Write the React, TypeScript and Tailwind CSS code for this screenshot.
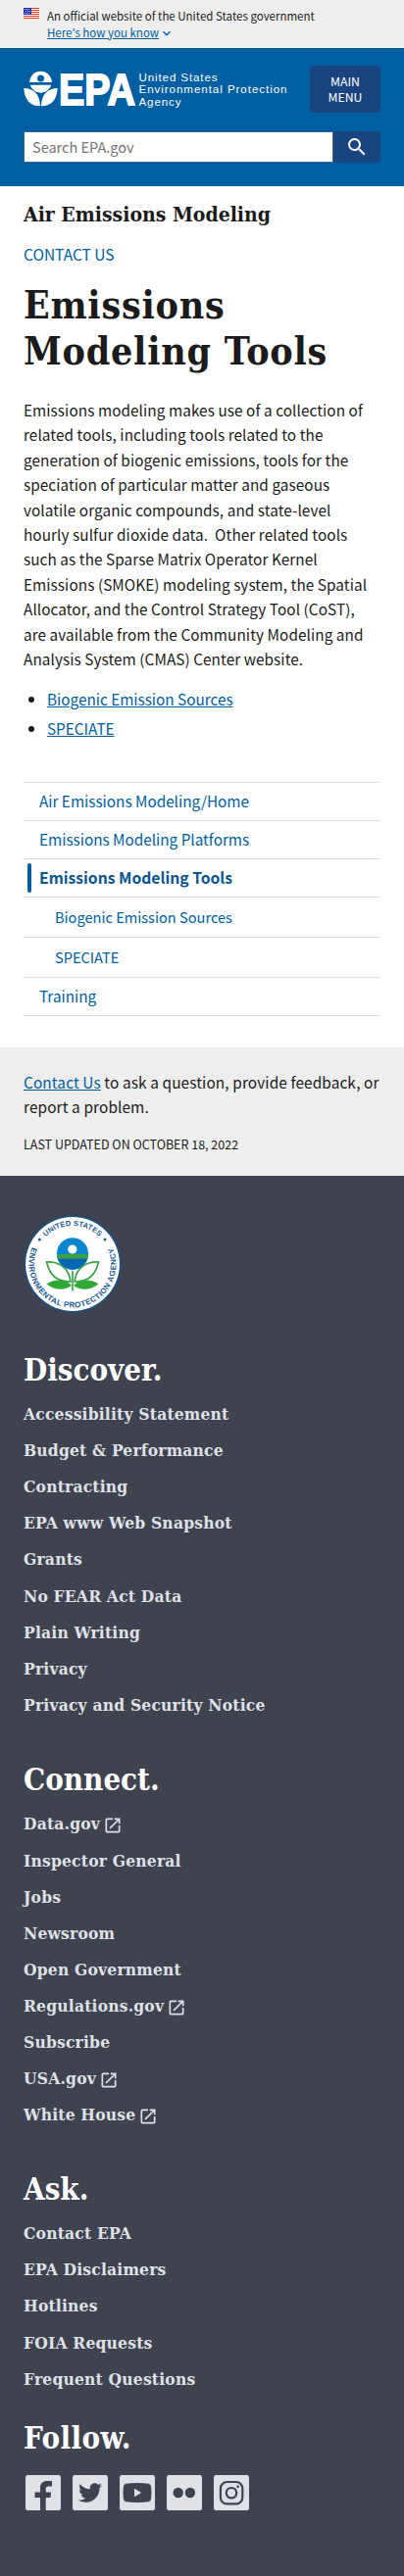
import React from "react";
import { MdSearch, MdOpenInNew, MdExpandMore } from "react-icons/md";
import { FaTwitter } from "react-icons/fa";

const sans = "font-['Noto_Sans_CJK_SC','Liberation_Sans',sans-serif]";
const serif = "font-['DejaVu_Serif_Condensed','DejaVu_Serif',serif] font-bold";

function Flag() {
  return (
    <svg className="mt-2 h-[11px] w-4 shrink-0" viewBox="0 0 16 11" shapeRendering="crispEdges">
      <rect width="16" height="11" fill="#fff" />
      {[0, 2, 4, 6, 8, 10].map((y) => (
        <rect key={y} y={y} width="16" height="1" fill="#db3e1f" />
      ))}
      <rect width="8" height="7" fill="#1e33b1" />
      {[1, 3, 5].map((y) =>
        [1, 3, 5].map((x) => <rect key={`${x}-${y}`} x={x + (y === 3 ? 1 : 0)} y={y} width="1" height="1" fill="#cfd6f5" />)
      )}
    </svg>
  );
}

function Logo() {
  return (
    <svg className="h-[42px] w-[272px] overflow-visible" viewBox="0 0 272 42" fill="#fff">
      <path d="M6.200 12a11.300 11.300 0 0 1 22.600 0z" />
      <circle cx="17.500" cy="8" r="3.500" fill="#005ea2" />
      <path d="M6.800 14.800h21.400c-1.500 4.800-6 7.900-10.700 7.900s-9.200-3.100-10.700-7.900z" />
      <path d="M.3 18C10 18 16.700 24 17 36.300 7 36.300 1 30 .3 18z" />
      <path d="M34.700 18C25 18 18.300 24 18 36.300 28 36.300 34 30 34.700 18z" />
      <g fontFamily="Liberation Sans" fontWeight="700" fontSize="45" stroke="#fff" strokeWidth="1.800">
        <text y="34.500" x="36" textLength="78" lengthAdjust="spacingAndGlyphs">EPA</text>
      </g>
      <g fontFamily="Liberation Sans" fontSize="11.600">
        <text x="117.500" y="10.500" textLength="80">United States</text>
        <text x="117.500" y="23.300" textLength="151">Environmental Protection</text>
        <text x="117.500" y="36.200" textLength="43">Agency</text>
      </g>
    </svg>
  );
}

function Seal() {
  return (
    <svg className="h-[100px] w-[100px]" viewBox="0 0 100 100">
      <defs>
        <path id="arc-top" d="M11 50a39 39 0 0 1 78 0" />
        <path id="arc-bottom" d="M10.300 29.800A44.500 44.500 0 1 0 89.700 29.800" />
      </defs>
      <circle cx="50" cy="50" r="49.800" fill="#205078" />
      <circle cx="50" cy="50" r="47.900" fill="#fff" />
      <g fill="#1d5c93" fontFamily="Liberation Sans" fontSize="7.600" fontWeight="700">
        <text letterSpacing=".1"><textPath href="#arc-top" startOffset="50%" textAnchor="middle">UNITED STATES</textPath></text>
        <text fontSize="8" letterSpacing=".45"><textPath href="#arc-bottom" startOffset="50%" textAnchor="middle">ENVIRONMENTAL PROTECTION AGENCY</textPath></text>
      </g>
      <circle cx="16.300" cy="25" r="1.500" fill="#1d5c93" />
      <circle cx="83" cy="25" r="1.500" fill="#1d5c93" />
      <circle cx="50" cy="39.500" r="16.200" fill="#0a85d0" />
      <path d="M33.800 40h32.400l-1 4.800H34.800z" fill="#3fa048" />
      <path d="M34.700 44.800h30.600a16.200 16.200 0 0 1-30.600 0z" fill="#0767b5" />
      <circle cx="49.800" cy="35" r="4.600" fill="#fff" />
      <g fill="#fff" stroke="#39a046" strokeWidth="1.700">
        <path d="M23.500 48c13-.500 23 6 24.500 20C34 68 27 62 23.500 48z" />
        <path d="M76.500 48c-13-.500-23 6-24.500 20 14 0 21-6 24.500-20z" />
      </g>
      <g fill="#2fa836">
        <path d="M23.500 70.500c8-6 20-5 25.500 1.500-6 5-17 5.500-25.500-1.500z" />
        <path d="M76.500 70.500c-8-6-20-5-25.500 1.500 6 5 17 5.500 25.500-1.500z" />
        <rect x="49.200" y="57" width="1.600" height="20.500" />
      </g>
    </svg>
  );
}

function Banner() {
  return (
    <div className="flex h-[49px] gap-2 bg-[#eee] px-6">
      <Flag />
      <div className="pt-[7.500px] text-[11.500px] leading-4 text-[#1b1b1b]">
        <p className="whitespace-nowrap">An official website of the United States government</p>
        <p className="flex items-center text-[#005ea2]">
          <span className="underline">Here's how you know</span>
          <MdExpandMore className="mt-0.5 size-4" />
        </p>
      </div>
    </div>
  );
}

function Header() {
  return (
    <header className="h-[141px] bg-[#005ea2] px-6 pt-[18px] text-white">
      <div className="flex h-12 justify-between">
        <div className="pt-[5px]"><Logo /></div>
        <button className="h-12 w-[72px] shrink-0 rounded-[3px] bg-[#1a4480] text-center text-[12.300px] leading-4">
          MAIN<br />MENU
        </button>
      </div>
      <div className="mt-[19px] flex h-8">
        <div className="h-8 w-[316px] border border-[#34658f] bg-white pl-2 text-[14.500px] leading-[30px] text-[#757575]">Search EPA.gov</div>
        <div className="flex h-8 w-12 items-center justify-center rounded-r bg-[#1a4480]"><MdSearch className="size-6" /></div>
      </div>
    </header>
  );
}

const paragraph = [
  "Emissions modeling makes use of a collection of",
  "related tools, including tools related to the",
  "generation of biogenic emissions, tools for the",
  "speciation of particular matter and gaseous",
  "volatile organic compounds, and state-level",
  "hourly sulfur dioxide data.\u00a0 Other related tools",
  "such as the Sparse Matrix Operator Kernel",
  "Emissions (SMOKE) modeling system, the Spatial",
  "Allocator, and the Control Strategy Tool (CoST),",
  "are available from the Community Modeling and",
  "Analysis System (CMAS) Center website.",
];

function Main() {
  return (
    <main className="h-[879px] px-6 pt-4 text-[#1b1b1b]">
      <h2 className={`${serif} text-[21px] leading-[26px]`}>Air Emissions Modeling</h2>
      <p className="mt-3.5 text-[15.500px] leading-[27px] text-[#005ea2]">CONTACT US</p>
      <h1 className={`${serif} mt-[15px] text-[39px] leading-[47px] tracking-[0.750px]`}>Emissions<br />Modeling Tools</h1>
      <p className="mt-6 whitespace-nowrap text-[15.300px] leading-[25.400px] tracking-[0.080px]">
        {paragraph.map((l) => <span key={l} className="block">{l}</span>)}
      </p>
      <ul className="mt-4 list-disc pl-6 text-[15.300px] leading-[25.400px]">
        <li><a className="text-[#005ea2] underline">Biogenic Emission Sources</a></li>
        <li className="mt-1"><a className="text-[#005ea2] underline">SPECIATE</a></li>
      </ul>
      <nav className="mt-[41.400px] border-b border-[#dfe1e2] text-[15.300px] text-[#005ea2]">
        <a className="block h-[39px] border-t border-[#dfe1e2] pl-4 leading-[37px]">Air Emissions Modeling/Home</a>
        <a className="block h-[39px] border-t border-[#dfe1e2] pl-4 leading-[37px]">Emissions Modeling Platforms</a>
        <a className="flex h-[39px] items-center border-t border-[#dfe1e2] pl-1 text-[15.700px] font-bold text-[#0b5591]">
          <span className="mr-2 h-[30px] w-1 rounded-full bg-[#005ea2]" />Emissions Modeling Tools
        </a>
        <a className="block h-[41px] border-t border-[#dfe1e2] pl-8 text-[14.600px] leading-[40px]">Biogenic Emission Sources</a>
        <a className="block h-[41px] border-t border-[#dfe1e2] pl-8 text-[14.600px] leading-[40px]">SPECIATE</a>
        <a className="block h-[39px] border-t border-[#dfe1e2] pl-4 leading-[37px]">Training</a>
      </nav>
    </main>
  );
}

function Group({ title, items }: { title: string; items: string[] }) {
  return (
    <section>
      <h2 className={`${serif} text-[31px] leading-9 text-white`}>{title}</h2>
      <ul className="mt-[9.500px]">
        {items.map((t) => (
          <li key={t} className={`${serif} flex h-[37.100px] items-center text-[17.300px] tracking-[0.200px] text-[#dfe1e6]`}>
            {t}
            {(t.endsWith(".gov") || t === "White House") && <MdOpenInNew className="ml-[3px] mt-0.5 size-5" />}
          </li>
        ))}
      </ul>
    </section>
  );
}

const glyphs: Record<string, React.ReactNode> = {
  facebook: (
    <path d="M15 36V23H9.500v-5.500H15V13c0-4.500 3-7 7-7h5v5.500h-3.500c-2 0-2.800 1-2.800 2.800v3.200h5.300l-.5 5.500h-4.800v13z" fill="#3f4350" />
  ),
  twitter: <FaTwitter x={6} y={6} size={24} color="#3f4350" />,
  youtube: (
    <>
      <path d="M6.500 8.700q11.500-1.400 23 0 2.300.4 2.600 2.800.7 6.500 0 13-.3 2.300-2.600 2.700-11.500 1.400-23 0-2.300-.4-2.600-2.700-.7-6.500 0-13 .3-2.400 2.600-2.800z" fill="#3f4350" />
      <path d="M15 13.700l7.200 4.300-7.200 4.300z" fill="#dfe1e6" />
    </>
  ),
  flickr: (
    <g fill="#3f4350">
      <circle cx="11.700" cy="18" r="5.200" />
      <circle cx="23.900" cy="18" r="5.200" />
    </g>
  ),
  instagram: (
    <g fill="none" stroke="#3f4350" strokeWidth="2.200">
      <rect x="6.900" y="7" width="22.400" height="22.400" rx="6.500" />
      <circle cx="18" cy="18.200" r="5.200" />
      <circle cx="24.600" cy="11.800" r="1.400" fill="#3f4350" stroke="none" />
    </g>
  ),
};

function Social() {
  return (
    <div className="mt-5 flex gap-3 pl-0.5">
      {Object.entries(glyphs).map(([name, glyph]) => (
        <svg key={name} className="size-9" viewBox="0 0 36 36">
          <rect width="36" height="36" rx="2.500" fill="#dfe1e6" />
          {glyph}
        </svg>
      ))}
    </div>
  );
}

export default function App() {
  return (
    <div className={`${sans} h-[2629px] w-[412px] overflow-hidden bg-white`}>
      <Banner />
      <Header />
      <Main />
      <div className="h-[131px] bg-[#eee] px-6 pt-[23px] text-[#1b1b1b]">
        <p className="whitespace-nowrap text-[15.400px] leading-[25.400px] tracking-[0.100px]"><a className="text-[#005ea2] underline">Contact Us</a> to ask a question, provide feedback, or<br />report a problem.</p>
        <p className="mt-[15px] text-[12.500px] leading-5">LAST UPDATED ON OCTOBER 18, 2022</p>
      </div>
      <footer className="h-[1429px] bg-[#3f4350] px-6 pt-10">
        <Seal />
        <div className="mt-10"><Group title="Discover." items={["Accessibility Statement", "Budget & Performance", "Contracting", "EPA www Web Snapshot", "Grants", "No FEAR Act Data", "Plain Writing", "Privacy", "Privacy and Security Notice"]} /></div>
        <div className="mt-[39px]"><Group title="Connect." items={["Data.gov", "Inspector General", "Jobs", "Newsroom", "Open Government", "Regulations.gov", "Subscribe", "USA.gov", "White House"]} /></div>
        <div className="mt-[38.500px]"><Group title="Ask." items={["Contact EPA", "EPA Disclaimers", "Hotlines", "FOIA Requests", "Frequent Questions"]} /></div>
        <h2 className={`${serif} mt-[22.500px] text-[31px] leading-9 tracking-[0.400px] text-white`}>Follow.</h2>
        <Social />
      </footer>
    </div>
  );
}
